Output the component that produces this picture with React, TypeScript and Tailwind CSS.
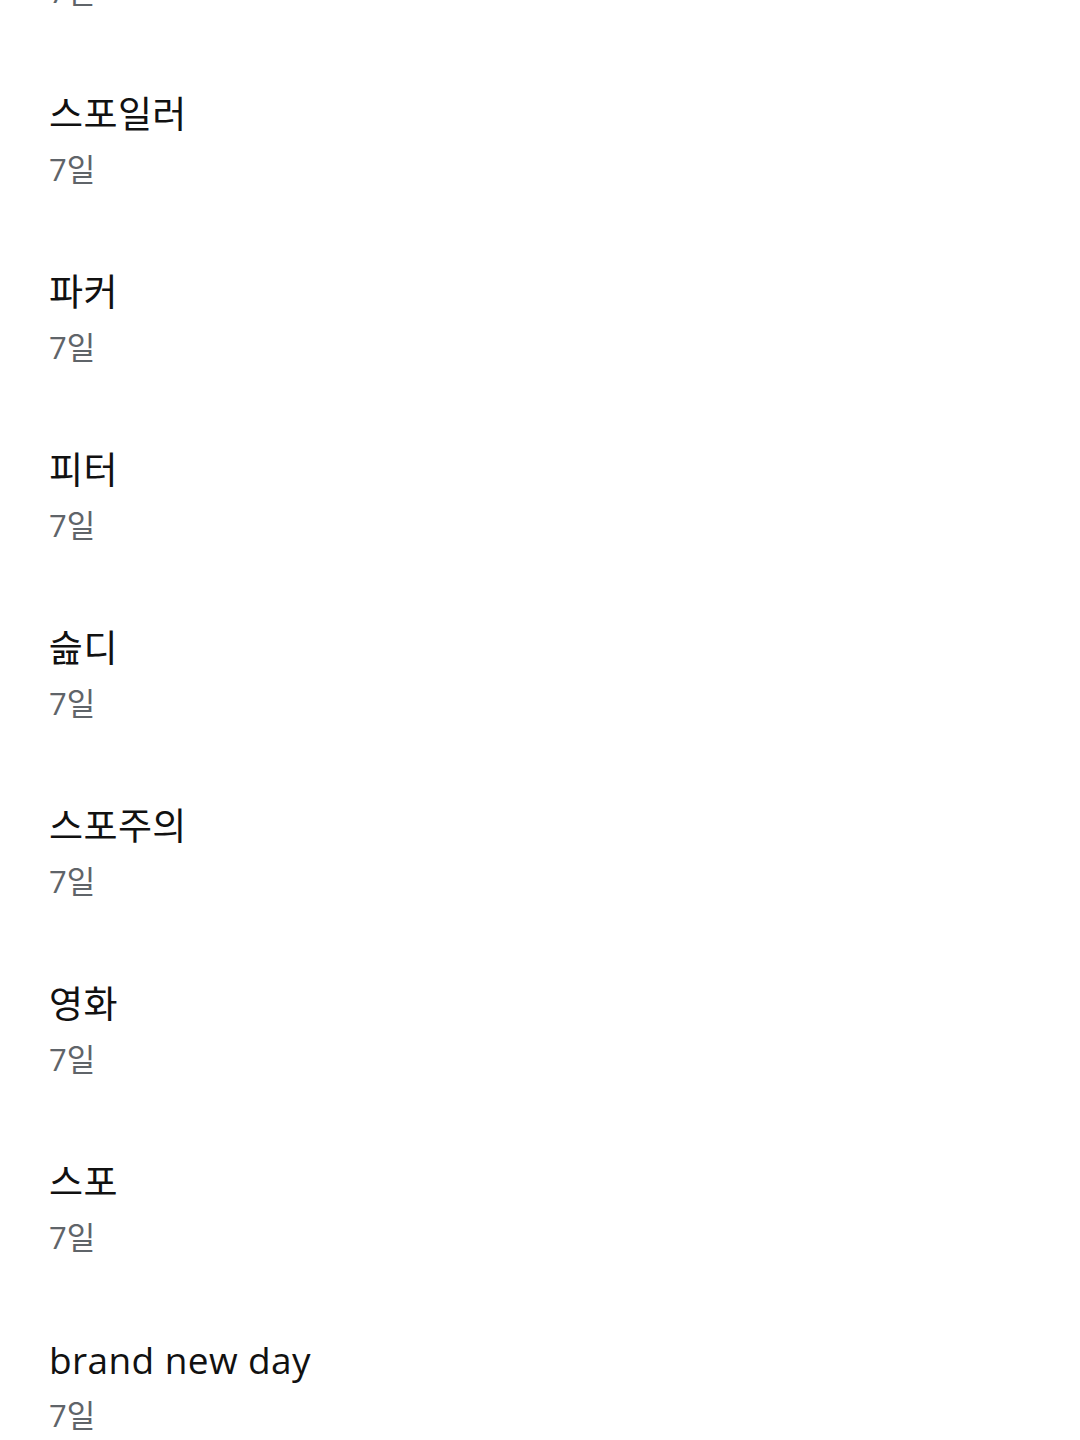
import React from "react";

type Entry = {
  title: string;
  age: string;
};

const entries: Entry[] = [
  { title: "스파이더맨", age: "7일" },
  { title: "스포일러", age: "7일" },
  { title: "파커", age: "7일" },
  { title: "피터", age: "7일" },
  { title: "슲디", age: "7일" },
  { title: "스포주의", age: "7일" },
  { title: "영화", age: "7일" },
  { title: "스포", age: "7일" },
  { title: "brand new day", age: "7일" },
];

function EntryRow({ entry }: { entry: Entry }) {
  return (
    <li className="flex flex-col px-[49px] py-[34px]">
      <span className="text-[37px] leading-[56px] tracking-[0.4px] text-[#111111]">{entry.title}</span>
      <span className="text-[31px] leading-[54px] text-[#5f6469]">{entry.age}</span>
    </li>
  );
}

export default function App() {
  return (
    <div
      className="h-[1440px] w-full overflow-hidden bg-white"
      style={{ fontFamily: '"Open Sans", "Noto Sans CJK KR", sans-serif' }}
    >
      {/* list is scrolled so the first entry sits above the top edge */}
      <ul className="-mt-[126px] flex flex-col">
        {entries.map((entry, i) => (
          <EntryRow key={i} entry={entry} />
        ))}
      </ul>
    </div>
  );
}
